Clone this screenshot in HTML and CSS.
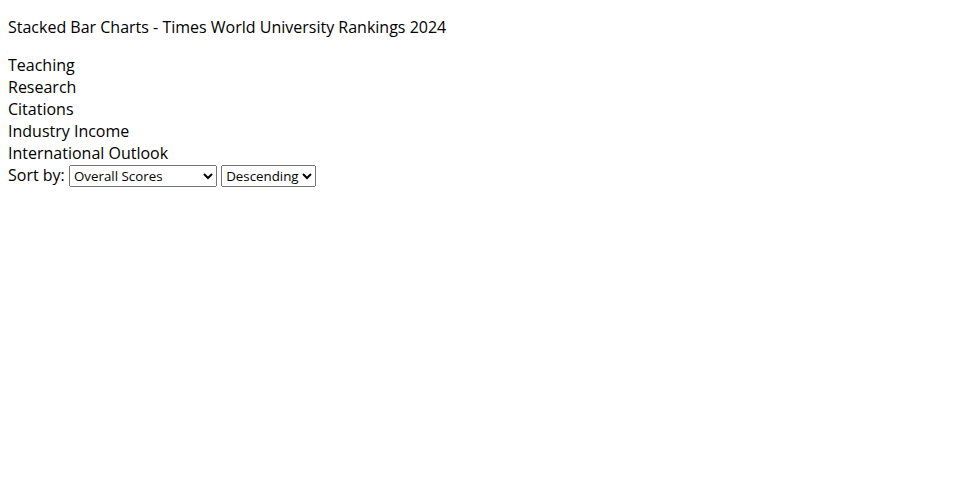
FILE: index.html
```html
<!DOCTYPE html>
<html lang="en">
<head>
  <meta charset="UTF-8" />
  <title>Stacked Bar Charts</title>
  <link rel="stylesheet" href="styles.css">
</head>
<body>
  <p class="title">Stacked Bar Charts - Times World University Rankings 2024</p>

  <div class="legend">
    <div class="legend-item">Teaching</div>
    <div class="legend-item">Research</div>
    <div class="legend-item">Citations</div>
    <div class="legend-item">Industry Income</div>
    <div class="legend-item">International Outlook</div>
  </div>

  <div class="controls">
    Sort by:
    <select id="sort-key" class="sort-key">
      <option>Overall Scores</option>
      <option>Teaching</option>
      <option>Research</option>
      <option>Citations</option>
      <option>Industry Income</option>
      <option>International Outlook</option>
    </select>
    <select id="sort-order" class="sort-order">
      <option>Descending</option>
      <option>Ascending</option>
    </select>
  </div>

  <div id="chart"></div>
</body>
</html>
```

FILE: styles.css
```css
body {
  font-family: 'Open Sans', sans-serif;
  font-size: 16px;
  color: #000;
  background: #fff;
}
.title {
  margin: 8px 0 16px;
}
.controls select {
  font-family: 'Open Sans', sans-serif;
  font-size: 13.33px;
}
.sort-key {
  width: 148px;
}
.sort-order {
  width: 95px;
}
```
